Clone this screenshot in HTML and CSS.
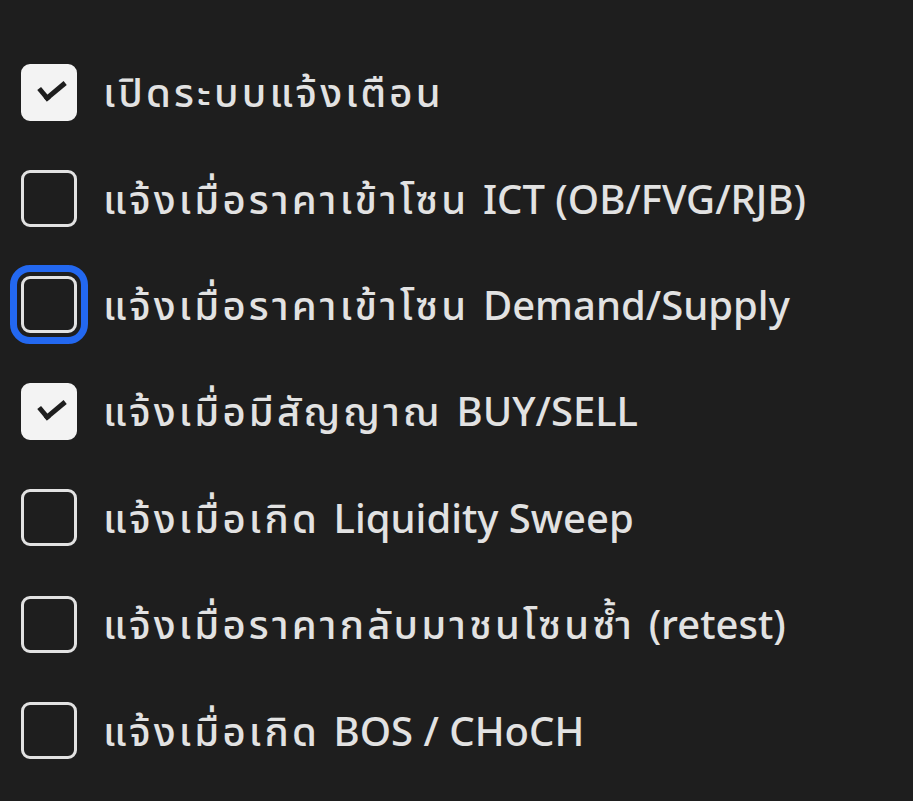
FILE: index.html
```html
<!DOCTYPE html>
<html lang="th">
<head>
    <meta charset="UTF-8">
    <meta name="viewport" content="width=device-width, initial-scale=1.0">
    <title>ตั้งค่าการแจ้งเตือน</title>
    <link rel="stylesheet" href="styles.css">
</head>
<body>
    <div class="alert-list">
        <label class="alert-item">
            <input type="checkbox" checked>
            <span class="box"></span>
            <span class="text"><span class="th">เปิดระบบแจ้งเตือน</span></span>
        </label>
        <label class="alert-item">
            <input type="checkbox">
            <span class="box"></span>
            <span class="text"><span class="th">แจ้งเมื่อราคาเข้าโซน </span>ICT (OB/FVG/RJB)</span>
        </label>
        <label class="alert-item focused">
            <input type="checkbox">
            <span class="box"></span>
            <span class="text"><span class="th">แจ้งเมื่อราคาเข้าโซน </span>Demand/Supply</span>
        </label>
        <label class="alert-item">
            <input type="checkbox" checked>
            <span class="box"></span>
            <span class="text"><span class="th">แจ้งเมื่อมีสัญญาณ </span>BUY/SELL</span>
        </label>
        <label class="alert-item">
            <input type="checkbox">
            <span class="box"></span>
            <span class="text"><span class="th">แจ้งเมื่อเกิด </span>Liquidity Sweep</span>
        </label>
        <label class="alert-item">
            <input type="checkbox">
            <span class="box"></span>
            <span class="text"><span class="th">แจ้งเมื่อราคากลับมาชนโซนซ้ำ </span>(retest)</span>
        </label>
        <label class="alert-item">
            <input type="checkbox">
            <span class="box"></span>
            <span class="text"><span class="th">แจ้งเมื่อเกิด </span>BOS / CHoCH</span>
        </label>
    </div>
</body>
</html>
```

FILE: styles.css
```css
body {
    margin: 0;
    background-color: #1e1e1e;
    font-family: "Noto Sans", "Noto Sans Thai", "DejaVu Sans", sans-serif;
    color: #e2e2e2;
}
.alert-list {
    display: flex;
    flex-direction: column;
    padding: 39px 0 0 21px;
}
.alert-item {
    display: flex;
    align-items: center;
    height: 106.4px;
    gap: 26px;
    cursor: pointer;
}
.alert-item input {
    display: none;
}
.box {
    flex: none;
    width: 56px;
    height: 57px;
    box-sizing: border-box;
    border: 3px solid #e2e2e2;
    border-radius: 9px;
    position: relative;
}
/* ช่องที่ถูกเลือก: พื้นขาวพร้อมเครื่องหมายถูก */
.alert-item input:checked + .box {
    background-color: #f3f3f3;
    border-color: #f3f3f3;
}
.alert-item input:checked + .box::after {
    content: "";
    position: absolute;
    left: 15px;
    top: 13px;
    width: 21px;
    height: 10px;
    border-left: 5px solid #1e1e1e;
    border-bottom: 5px solid #1e1e1e;
    transform: rotate(-40deg);
}
.alert-item.focused .box {
    outline: 7px solid #2368f0;
    outline-offset: 4px;
}
.text {
    font-size: 40px;
    line-height: 1;
    font-weight: 500;
    white-space: nowrap;
}
.th {
    letter-spacing: 3.2px;
}
```
